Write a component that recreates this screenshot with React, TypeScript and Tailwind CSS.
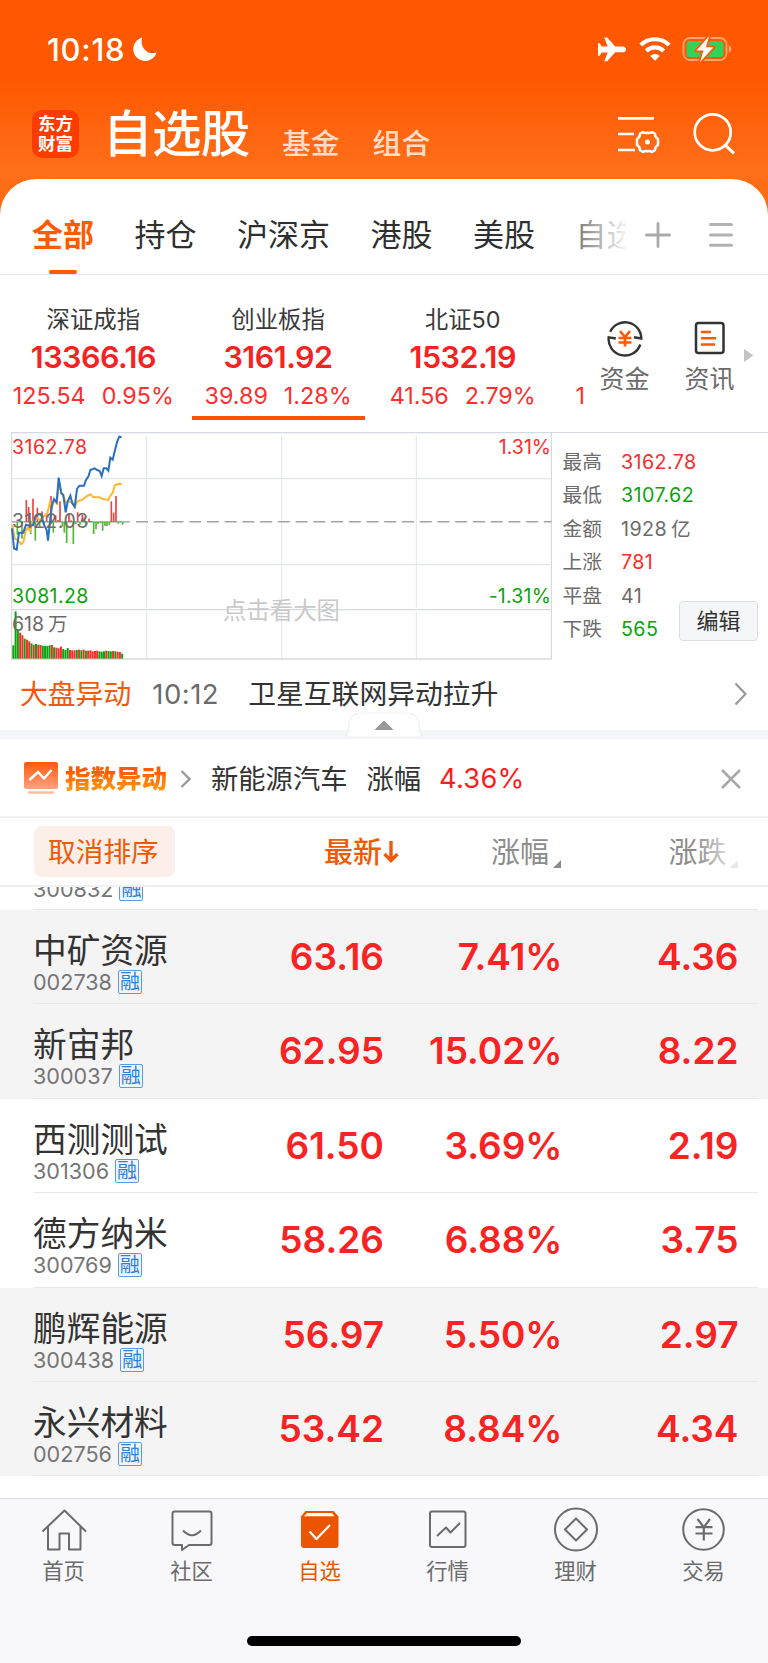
import type { ReactNode } from 'react'

interface Stock {
  name: string
  code: string
  price: string
  pct: string
  change: string
  shaded: boolean
}

const STOCKS: Stock[] = [
  { name: '中矿资源', code: '002738', price: '63.16', pct: '7.41%', change: '4.36', shaded: true },
  { name: '新宙邦', code: '300037', price: '62.95', pct: '15.02%', change: '8.22', shaded: true },
  { name: '西测测试', code: '301306', price: '61.50', pct: '3.69%', change: '2.19', shaded: false },
  { name: '德方纳米', code: '300769', price: '58.26', pct: '6.88%', change: '3.75', shaded: false },
  { name: '鹏辉能源', code: '300438', price: '56.97', pct: '5.50%', change: '2.97', shaded: true },
  { name: '永兴材料', code: '002756', price: '53.42', pct: '8.84%', change: '4.34', shaded: true },
]

const INDICES = [
  { name: '深证成指', value: '13366.16', change: '125.54', pct: '0.95%', active: false },
  { name: '创业板指', value: '3161.92', change: '39.89', pct: '1.28%', active: true },
  { name: '北证50', value: '1532.19', change: '41.56', pct: '2.79%', active: false },
]

const STATS = [
  { label: '最高', value: '3162.78', unit: '', color: 'text-[#fb2c2c]' },
  { label: '最低', value: '3107.62', unit: '', color: 'text-[#0ba30b]' },
  { label: '金额', value: '1928', unit: '亿', color: 'text-[#6b6b6b]' },
  { label: '上涨', value: '781', unit: '', color: 'text-[#fb2c2c]' },
  { label: '平盘', value: '41', unit: '', color: 'text-[#6b6b6b]' },
  { label: '下跌', value: '565', unit: '', color: 'text-[#0ba30b]' },
]

// height of each volume bar, g = falling, r = rising
const VOLUME =
  'g40 g142 g88 r78 r70 g60 r57 r52 g46 r42 g44 r42 r41 g39 g38 g38 g40 r41 g34 r33 r31 r36 g29 g26 g32 r26 r25 r25 g26 r27 g25 r27 g24 r24 r25 r22 r23 r24 g22 g21 g22 r24 g23 g22 r23 g22 r21 r20 g15'.split(' ')

// bars around the zero line: [x, height], negative falls below it
const FLOW: [number, number][] = [
  [52, -38], [66, -50], [79, 66], [86, 45], [92, -36], [99, 70], [106, -56], [112, 43], [119, -14], [126, 32],
  [133, -8], [140, 26], [153, 78], [160, -32], [167, 20], [174, 6], [180, 62], [187, -14], [193, -32], [200, -63],
  [207, 26], [213, 5], [220, -66], [227, -6], [233, 29], [240, -8], [247, 22], [253, 14], [260, -8], [267, 10], [274, 3],
  [281, -36], [288, -22], [294, -6], [301, -4], [308, -26], [315, -12], [321, -12], [328, -9], [334, 62], [341, 28],
  [348, 78], [355, -5], [361, 2], [368, -8],
]

function StatusBar() {
  return (
    <div className="flex h-[98px] items-center justify-between pl-[47px] pr-[36px] text-white">
      <div className="flex items-center gap-[8px]">
        <span className="text-[31px] font-medium leading-none tracking-[0.7px]">10:18</span>
        <svg width="24" height="24" viewBox="0 0 24 24" fill="currentColor">
          <path d="M9.2 .4A12 12 0 1 0 23.7 15.6C15.5 18.6 6.2 11.3 9.2 .4z" />
        </svg>
      </div>
      <div className="flex items-center">
        <svg width="28" height="25" viewBox="0 0 28 25" fill="currentColor">
          <path d="M6.3.5h2.9l8 9h7.6c2 0 3.2 1.4 3.2 2.9s-1.2 2.9-3.2 2.9h-7.6l-8 9H6.3l3.4-8.8-6 0-2.1 3.3H0V6.2h1.6l2.1 3.3 6 0z" />
        </svg>
        <svg className="ml-[13px]" width="32" height="24" viewBox="0 0 32 24">
          <path d="M1.8 8.1a20.2 20.2 0 0 1 28.4 0M7.3 13.9a12.4 12.4 0 0 1 17.4 0" fill="none" stroke="currentColor" strokeWidth="4.2" />
          <path d="M11.3 18.9a6.9 6.9 0 0 1 9.4 0L16 23.7z" fill="currentColor" />
        </svg>
        <svg className="ml-[11px]" width="50" height="26" viewBox="0 0 50 26">
          <rect x="1.5" y="2" width="43" height="22" rx="6.5" fill="none" stroke="#fff" strokeOpacity=".45" strokeWidth="1.8" />
          <path d="M46.8 9.5c3.4 1 3.4 6 0 7z" fill="#fff" fillOpacity=".5" />
          <rect x="4.5" y="5" width="37" height="16" rx="3.5" fill="#33d158" />
          <path d="M27.1 0 14.5 14.6h7L18.1 26 31.5 11.2h-7.6z" fill="#fff" stroke="#ff5a02" strokeWidth="3.6" strokeLinejoin="round" paintOrder="stroke" />
        </svg>
      </div>
    </div>
  )
}

function TitleBar() {
  return (
    <div className="flex h-[81px] items-start pl-[32px]">
      <div className="mt-[12px] flex h-[48px] w-[47px] flex-col items-center justify-center rounded-[10px] bg-[#ff3c00] text-[17.5px] font-bold leading-[20px] text-white">
        <span>东方</span>
        <span>财富</span>
      </div>
      <h1 className="ml-[24px] mt-[12px] w-[149px] whitespace-nowrap text-[49.5px] font-medium leading-[48px] tracking-[-0.6px] text-white">自选股</h1>
      <span className="ml-[30px] mt-[32px] whitespace-nowrap text-[28.8px] font-medium leading-[28px] text-[#ffdcc9]">基金</span>
      <span className="ml-[33px] mt-[32px] whitespace-nowrap text-[28.8px] font-medium leading-[28px] text-[#ffdcc9]">组合</span>
      <svg className="ml-[188px] mt-[17px] shrink-0" width="42" height="40" viewBox="0 0 42 40" fill="none" stroke="#fff" strokeWidth="2.7">
        <path d="M0 3.3h36M0 19h16M0 35h17" />
        <path
          d="M25 17q2.500 1.700 4.500.6 2 1.100 4.500-.6l3 1.800q-.2 3.200 3 5.200v6q-3.200 2-3 5.200l-3 1.800q-2.500-1.700-4.500-.6-2-1.100-4.500.6l-3-1.800q.2-3.200-3-5.200v-6q3.200-2 3-5.200z"
          strokeWidth="2.5"
          strokeLinejoin="round"
        />
        <circle cx="29.5" cy="27" r="2.5" fill="#fff" stroke="none" />
      </svg>
      <svg className="ml-[32.5px] mt-[14px] shrink-0" width="42" height="43" viewBox="0 0 42 43" fill="none" stroke="#fff" strokeWidth="2.7">
        <circle cx="19.7" cy="20.3" r="18" />
        <path d="M32 32.8l9 8.6" strokeWidth="3" />
      </svg>
    </div>
  )
}

function GroupTabs() {
  return (
    <div className="flex h-[96px] border-b border-[#e9e9eb] text-[31px] leading-[112px] text-[#2f2f2f]">
      <div className="relative w-[626px] overflow-hidden whitespace-nowrap">
        <div className="flex gap-[40.5px] pl-[32px]">
          <span className="font-bold text-[#ff5a00]">全部</span>
          <span>持仓</span>
          <span>沪深京</span>
          <span>港股</span>
          <span>美股</span>
          <span>自选</span>
        </div>
        <div className="absolute right-0 top-0 h-[95px] w-[72px] bg-gradient-to-r from-white/10 to-white/95" />
        <div className="absolute left-[49px] top-[91px] h-[4px] w-[28px] rounded-full bg-[#ff5a00]" />
      </div>
      <svg className="ml-[19px] mt-[43px]" width="26" height="26" stroke="#aaa" strokeWidth="2.8" strokeLinecap="round">
        <path d="M1.4 13h23.2M13 1.4v23.2" />
      </svg>
      <svg className="ml-[38px] mt-[43px]" width="24" height="26" stroke="#b2b2b2" strokeWidth="3" strokeLinecap="round">
        <path d="M1.5 2.5h21M1.5 13h21M1.5 23.3h21" />
      </svg>
    </div>
  )
}

function IndexStrip() {
  return (
    <div className="flex h-[157px]">
      <div className="flex w-[588px] overflow-hidden pl-[1px]">
        {INDICES.map((it) => (
          <div key={it.name} className="flex w-[184.7px] shrink-0 flex-col items-center whitespace-nowrap">
            <span className="mt-[31px] text-[23.4px] leading-[28px] text-[#3a3a3a]">{it.name}</span>
            <span className="mt-[6px] text-[30.5px] font-semibold leading-[34px] tracking-[-0.5px] text-[#f92222]">{it.value}</span>
            <div className="mt-[6px] flex gap-[16px] text-[23.3px] leading-[31px] text-[#fa3030]">
              <span>{it.change}</span>
              <span>{it.pct}</span>
            </div>
            {it.active && <div className="mt-[5px] h-[4px] w-[173px] bg-[#ff5200]" />}
          </div>
        ))}
        <span className="mt-[105px] pl-[20.5px] text-[23.3px] leading-[31px] text-[#fa3030]">1</span>
      </div>
      <div className="flex flex-1 text-[25px] leading-[30px] text-[#6b6b6b]">
        <div className="ml-[10px] flex w-[53px] flex-col items-center whitespace-nowrap">
          <svg className="mt-[44px]" width="38" height="38" viewBox="0 0 38 38" fill="none" stroke="#333" strokeWidth="2.4">
            <path d="M4.200 12.800A16.300 16.300 0 0 1 35.300 19.500L28 18.300M34.300 25.500A16.300 16.300 0 0 1 2.700 18.300L9.800 19.500" />
            <path d="M14 12l5 6 5-6M12.5 19h13M12.5 23.5h13M19 18v9.5" stroke="#ff5a00" strokeWidth="2.7" />
          </svg>
          <span className="mt-[7px]">资金</span>
        </div>
        <div className="ml-[32px] flex w-[53px] flex-col items-center whitespace-nowrap">
          <svg className="mt-[44px]" width="38" height="38" viewBox="0 0 38 38" fill="none" stroke="#333" strokeWidth="2.5">
            <rect x="5" y="4" width="27.5" height="30" rx="2.5" />
            <path d="M10 13h10M10 19.3h15M10 25.5h14" stroke="#ff5a00" strokeWidth="2.6" />
          </svg>
          <span className="mt-[7px]">资讯</span>
        </div>
        <svg className="ml-[8px] mt-[74px]" width="10" height="13" fill="#c4c4c4">
          <path d="M0 0l9.5 6.5L0 13z" />
        </svg>
      </div>
    </div>
  )
}

function TrendChart() {
  return (
    <div className="relative ml-[11px] h-[228px] w-[541px] shrink-0 text-[19.5px] leading-[24px]">
      <svg width="541" height="228" viewBox="33 21 1623 684" fill="none">
        <g stroke="#e3e6ee" strokeWidth="3.5">
          <path d="M36 161h1616M36 419h1616M440 33v514M440 560v142M845 33v514M845 560v142M1249 33v514M1249 560v142" />
        </g>
        <path d="M34.5 23h1620v679H34.5zM34 554h1620" stroke="#d6d9e0" strokeWidth="4" />
        <path d="M36 290.5h354" stroke="#999" strokeWidth="4" />
        <path d="M408 290.5h1246" stroke="#a3a3a3" strokeWidth="4.5" strokeDasharray="36 17.2" />
        {FLOW.map(([x, h]) => (
          <rect key={x} x={x - 2.5} y={h > 0 ? 291 - h : 291} width="5" height={Math.abs(h)} fill={h > 0 ? '#ec4444' : '#4fb832'} />
        ))}
        {VOLUME.map((v, i) => {
          const h = Number(v.slice(1))
          return <rect key={i} x={37 + i * 6.8} y={701 - h} width="6" height={h} fill={v[0] === 'g' ? '#0ba30b' : '#f92c2c'} />
        })}
        <g strokeWidth="6">
          <path
            d="M37 300L44 340 52 345 58 350 63 358 70 352 77 318 84 308 90 318 98 290 110 278 120 285 130 275 142 265 150 232 156 245 164 225 170 235 177 175 184 205 191 215 198 235 205 228 217 235 225 245 232 228 245 225 258 215 271 208 280 217 298 217 308 222 325 225 331 212 338 203 345 180 360 176 365 178"
            stroke="#fdb833"
          />
          <path
            d="M36 310L42 370 50 374 57 323 70 323 78 299 90 303 100 300 106 275 116 267 124 270 132 300 140 315 144 347 150 290 156 240 162 222 170 232 176 158 184 205 190 210 197 262 203 230 211 212 217 235 224 246 231 192 238 182 252 182 258 165 265 155 271 135 284 130 292 135 299 138 305 153 311 130 319 130 325 137 331 98 338 104 345 75 352 48 358 35 365 37"
            stroke="#2a70c2"
          />
        </g>
      </svg>
      <span className="absolute left-[1px] top-[77px] tracking-[0.5px] text-[#6b6b6b]">3122.03</span>
      <span className="absolute left-[1px] top-[2.5px] tracking-[0.5px] text-[#fb2c2c]">3162.78</span>
      <span className="absolute right-[1px] top-[2.5px] text-[#fb2c2c]">1.31%</span>
      <span className="absolute left-[1px] top-[152px] tracking-[0.4px] text-[#0ba30b]">3081.28</span>
      <span className="absolute right-[1px] top-[152px] tracking-[0.2px] text-[#0ba30b]">-1.31%</span>
      <span className="absolute left-[1px] top-[180px] flex gap-[4px] text-[#6b6b6b]">
        <span>618</span>
        <span>万</span>
      </span>
      <span className="absolute left-[212px] top-[167px] whitespace-nowrap text-[23.4px] text-[#c9c9c9]">点击看大图</span>
    </div>
  )
}

function MarketPanel() {
  return (
    <div className="flex h-[228px]">
      <TrendChart />
      <div className="relative flex-1 border-t border-[#d6d9e0] pl-[10.5px] pt-[12.5px]">
        {STATS.map((s) => (
          <div key={s.label} className="flex h-[33.6px] items-center text-[19.7px]">
            <span className="w-[58.5px] text-[#6b6b6b]">{s.label}</span>
            <span className={`tracking-[0.4px] ${s.color}`}>{s.value}</span>
            {s.unit && <span className="ml-[4px] text-[#6b6b6b]">{s.unit}</span>}
          </div>
        ))}
        <button className="absolute left-[127px] top-[167.5px] h-[40px] w-[79px] rounded-[4px] border border-[#dcdee2] bg-[#f5f6f9] text-[22px] leading-[36px] text-[#333]">
          编辑
        </button>
      </div>
    </div>
  )
}

function NewsRow() {
  return (
    <div className="relative flex h-[79px] items-start border-b-[9px] border-[#f5f6f9] pl-[20px] text-[27.8px] leading-[68px]">
      <span className="whitespace-nowrap text-[#f05a0a]">大盘异动</span>
      <span className="ml-[21px] w-[75px] text-[27.5px] tracking-[0.5px] text-[#6b6b6b]">10:12</span>
      <span className="ml-[21px] whitespace-nowrap text-[#333]">卫星互联网异动拉升</span>
      <svg className="ml-[236px] mt-[22px] shrink-0" width="13" height="24" fill="none" stroke="#999" strokeWidth="2.2">
        <path d="M1.5 1.5L11.5 12 1.5 22.5" />
      </svg>
      <svg className="absolute left-[346px] top-[52px]" width="76" height="26">
        <path d="M1 25L3 12C5 3 9 1 15 1h46c6 0 10 2 12 11l2 13z" fill="#fff" stroke="#efeff1" strokeWidth="1.2" />
        <path d="M28.5 18l8.5-8.700q1-.8 2 0l8.500 8.700z" fill="#999" />
      </svg>
    </div>
  )
}

function AlertRow() {
  return (
    <div className="flex h-[79px] items-center border-b-2 border-[#f1f1f3] pb-px pl-[23px] text-[27.3px] leading-[40px] text-[#333]">
      <svg className="mt-[2px]" width="36" height="34" viewBox="0 0 36 34" fill="none">
        <defs>
          <linearGradient id="alertFill" x1="0" y1="0" x2="0" y2="1">
            <stop offset="0" stopColor="#ff5a08" />
            <stop offset="1" stopColor="#ffa183" />
          </linearGradient>
        </defs>
        <rect x="1" y="1" width="34" height="27" rx="2" fill="url(#alertFill)" />
        <path d="M6.5 19l8.5-8 6 6.5L28.5 9" stroke="#fff" strokeWidth="2.5" />
        <path d="M6 31.5h24" stroke="#ffbf9e" strokeWidth="2.5" strokeLinecap="round" />
      </svg>
      <span className="ml-[6px] mt-[4px] whitespace-nowrap bg-gradient-to-b from-[#ff5a00] from-30% to-[#ff9d14] to-85% bg-clip-text text-[25.5px] font-black text-transparent">
        指数异动
      </span>
      <svg className="ml-[13px] mt-[3px]" width="11" height="18" fill="none" stroke="#999" strokeWidth="2.3">
        <path d="M1.5 1l8 8-8 8" />
      </svg>
      <span className="ml-[20px] mt-[5px] whitespace-nowrap">新能源汽车</span>
      <span className="ml-[19px] mt-[5px] whitespace-nowrap">涨幅</span>
      <span className="ml-[18px] mt-[4px] w-[90px] tracking-[0.2px] text-[#fb1e1e]">4.36%</span>
      <svg className="ml-[192px] mt-[3px]" width="20" height="20" stroke="#a8a8a8" strokeWidth="2.5">
        <path d="M1 1l18 18M19 1L1 19" />
      </svg>
    </div>
  )
}

function SortHeader() {
  return (
    <div className="flex h-[69px] items-center border-b-2 border-[#f1f1f3] pl-[34px] leading-[50px]">
      <button className="h-[51px] w-[141px] whitespace-nowrap rounded-[8px] bg-[#fceee8] pl-[14px] pt-px text-left text-[27.7px] text-[#f05a05]">
        取消排序
      </button>
      <div className="ml-[149px] mt-[3px] flex items-center text-[29px] font-medium text-[#f05a05]">
        <span className="whitespace-nowrap">最新</span>
        <svg className="-mt-[3px] ml-[1px]" width="16" height="22" fill="none" stroke="#f05a05" strokeWidth="3.4">
          <path d="M8 0v19M1.5 13L8 19.5 14.5 13" />
        </svg>
      </div>
      <div className="ml-[92px] mt-[3px] flex items-center text-[29px] text-[#8c8c8c]">
        <span className="whitespace-nowrap">涨幅</span>
        <svg className="ml-[3.5px] mt-[22px]" width="8" height="8" fill="#8a8a90">
          <path d="M8 0v8H0z" />
        </svg>
      </div>
      <div className="relative ml-[108px] mt-[3px] flex items-center text-[29px] text-[#8c8c8c]">
        <span className="whitespace-nowrap">涨跌</span>
        <svg className="ml-[3px] mt-[22px]" width="8" height="8" fill="#8a8a90">
          <path d="M8 0v8H0z" />
        </svg>
        <div className="absolute right-0 top-0 h-full w-[44px] bg-gradient-to-r from-white/0 to-white/85" />
      </div>
    </div>
  )
}

function Code({ children }: { children: ReactNode }) {
  return (
    <div className="flex items-center gap-[6px] text-[21.6px] leading-[24px] text-[#757575]">
      <span>{children}</span>
      <span className="flex h-[24px] w-[24px] items-center justify-center rounded-[2px] border border-[#5b9be6] bg-[#eef5fd] text-[20px] leading-none text-[#2f7fdc]">
        融
      </span>
    </div>
  )
}

function StockRow({ stock }: { stock: Stock }) {
  return (
    <div className={`h-[94.4px] pl-[33px] pr-[10px] ${stock.shaded ? 'bg-[#f4f4f5]' : 'bg-white'}`}>
      <div className="flex h-full border-b border-[#e9e9eb] text-[37px] font-semibold leading-[94px] text-[#f82323]">
        <div className="flex w-[160px] flex-col font-normal">
          <span className="mt-[22px] whitespace-nowrap text-[33.7px] leading-[38px] text-[#333]">{stock.name}</span>
          <Code>{stock.code}</Code>
        </div>
        <span className="w-[191px] text-right">{stock.price}</span>
        <span className="w-[178.5px] text-right">{stock.pct}</span>
        <span className="w-[176px] text-right">{stock.change}</span>
      </div>
    </div>
  )
}

function NavItem({ label, active, children }: { label: string; active?: boolean; children: ReactNode }) {
  return (
    <div className={`flex w-[128px] flex-col items-center ${active ? 'text-[#eb5500]' : 'text-[#6b6b6b]'}`}>
      <svg width="46" height="46" viewBox="0 0 46 46" fill="none" stroke="currentColor" strokeWidth="2" strokeLinejoin="round">
        {children}
      </svg>
      <span className="mt-[5px] pr-px text-[21.3px] leading-[26px]">{label}</span>
    </div>
  )
}

function BottomNav() {
  return (
    <nav className="flex h-[165px] flex-col items-center border-t border-[#dddee0] bg-[#f8f8fa]">
      <div className="flex pt-[8px]">
        <NavItem label="首页">
          <path d="M1.5 24.5L23.5 3.5 45 24.5M7 20v22.5h11.5v-16H28v16h11.5V20" />
        </NavItem>
        <NavItem label="社区">
          <path d="M5.5 4.5h35q2 0 2 2V36q0 2-2 2H20l-7 5V38H5.500q-2 0-2-2V6.500q0-2 2-2zM14 23.500q9 9.500 18 0" />
        </NavItem>
        <NavItem label="自选" active>
          <path d="M8.500 4h28l5 5.500V38q0 3-3 3H7q-3 0-3-3V9.500z" fill="currentColor" stroke="none" />
          <path d="M10 6h25l2.500 3.300H7z" fill="#fff" stroke="none" />
          <path d="M12.500 24.500l7 7.500 13.500-14" stroke="#fff" strokeWidth="2.200" />
        </NavItem>
        <NavItem label="行情">
          <rect x="5" y="4.5" width="35.5" height="35.5" rx="2" />
          <path d="M12 29l9-8.5 4.5 5 9.500-9.500" />
        </NavItem>
        <NavItem label="理财">
          <circle cx="23" cy="22.5" r="21" />
          <path d="M23 11.5l11 11-11 11-11-11z" />
        </NavItem>
        <NavItem label="交易">
          <circle cx="22.5" cy="22.5" r="20.3" />
          <path d="M16.5 12l6.300 8.200L29 12M14.500 20.200h17M14.500 26.500h17M22.800 20v13.500" strokeWidth="2.200" />
        </NavItem>
      </div>
      <div className="mt-[52px] h-[10px] w-[274px] rounded-full bg-black" />
    </nav>
  )
}

export default function App() {
  return (
    <div className="h-[1663px] w-[768px] overflow-hidden bg-[#ff6c16] font-['Inter','Noto_Sans_CJK_SC',sans-serif]">
      <header className="h-[179px] bg-gradient-to-b from-[#ff5800] from-45% to-[#ff6e18] to-95%">
        <StatusBar />
        <TitleBar />
      </header>
      <main className="rounded-t-[36px] bg-white">
        <GroupTabs />
        <IndexStrip />
        <MarketPanel />
        <NewsRow />
        <AlertRow />
        <SortHeader />
        {/* Row scrolled under the header */}
        <div className="flex h-[23px] flex-col justify-end overflow-hidden pl-[33px] pr-[10px]">
          <div className="border-b border-[#e9e9eb] pb-[8px]">
            <Code>300832</Code>
          </div>
        </div>
        {STOCKS.map((s) => (
          <StockRow key={s.code} stock={s} />
        ))}
        <div className="h-[21.6px]" />
        <BottomNav />
      </main>
    </div>
  )
}
